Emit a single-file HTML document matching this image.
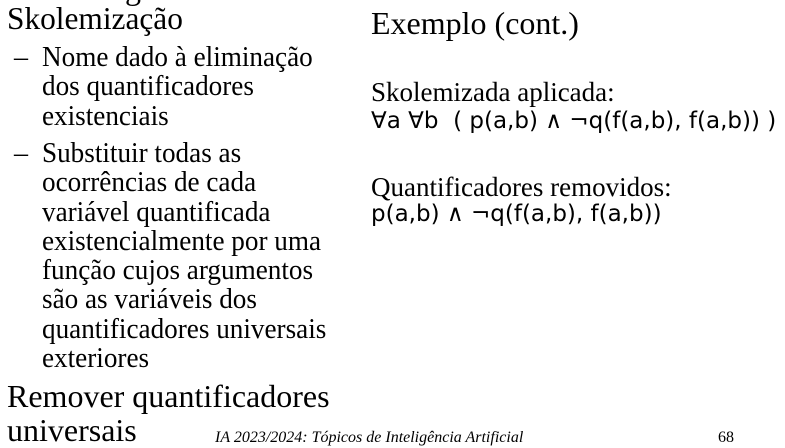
<!DOCTYPE html>
<html><head><meta charset="utf-8"><style>
html,body{margin:0;padding:0;background:#fff;}
body{width:785px;height:446px;position:relative;overflow:hidden;color:#000;}
.t{position:absolute;white-space:nowrap;font-family:"Liberation Serif",serif;transform-origin:0 50%;}
.s{position:absolute;white-space:nowrap;font-family:"DejaVu Sans","Liberation Sans",sans-serif;}
</style></head><body>
<div class="t" style="left:125px;top:-27px;font-size:32px;line-height:30px">g</div>
<div class="t" style="left:7px;top:2px;font-size:32px;line-height:32px;transform:scaleX(0.98)">Skolemização</div>

<div class="t" style="left:14px;top:43px;font-size:28px;line-height:29.3px">–</div>
<div class="t" style="left:42px;top:43px;font-size:28px;line-height:29.3px;transform:scaleX(0.97)">Nome dado à eliminação<br>dos quantificadores<br>existenciais</div>
<div class="t" style="left:14px;top:139px;font-size:28px;line-height:29.3px">–</div>
<div class="t" style="left:42px;top:139px;font-size:28px;line-height:29.3px;transform:scaleX(0.97)">Substituir todas as<br>ocorrências de cada<br>variável quantificada<br>existencialmente por uma<br>função cujos argumentos<br>são as variáveis dos<br>quantificadores universais<br>exteriores</div>

<div class="t" style="left:7px;top:379px;font-size:32px;line-height:34px">Remover quantificadores<br>universais</div>

<div class="t" style="left:215px;top:429px;font-size:16px;line-height:18px;font-style:italic">IA 2023/2024: Tópicos de Inteligência Artificial</div>
<div class="t" style="left:718px;top:429px;font-size:16px;line-height:18px">68</div>

<div class="t" style="left:371px;top:7px;font-size:32px;line-height:32px">Exemplo (cont.)</div>
<div class="t" style="left:371px;top:79px;font-size:27px;line-height:27px">Skolemizada aplicada:</div>
<div class="s" style="left:371px;top:108px;font-size:23px;line-height:27px">∀a ∀b &nbsp;( p(a,b) ∧ ¬q(f(a,b), f(a,b)) )</div>
<div class="t" style="left:371px;top:174px;font-size:27px;line-height:27px">Quantificadores removidos:</div>
<div class="s" style="left:371px;top:201px;font-size:23px;line-height:27px">p(a,b) ∧ ¬q(f(a,b), f(a,b))</div>
</body></html>
